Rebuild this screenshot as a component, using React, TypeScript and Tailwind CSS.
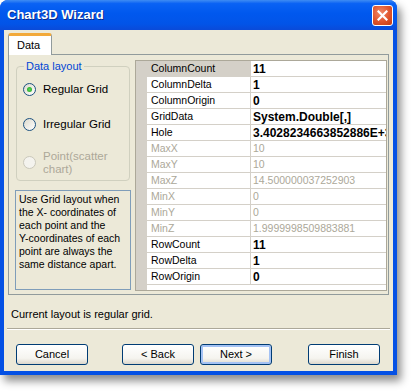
import React from "react";

type Row = {
  name: string;
  value: string;
  disabled?: boolean;
  selected?: boolean;
};

const rows: Row[] = [
  { name: "ColumnCount", value: "11", selected: true },
  { name: "ColumnDelta", value: "1" },
  { name: "ColumnOrigin", value: "0" },
  { name: "GridData", value: "System.Double[,]" },
  { name: "Hole", value: "3.4028234663852886E+38" },
  { name: "MaxX", value: "10", disabled: true },
  { name: "MaxY", value: "10", disabled: true },
  { name: "MaxZ", value: "14.500000037252903", disabled: true },
  { name: "MinX", value: "0", disabled: true },
  { name: "MinY", value: "0", disabled: true },
  { name: "MinZ", value: "1.9999998509883881", disabled: true },
  { name: "RowCount", value: "11" },
  { name: "RowDelta", value: "1" },
  { name: "RowOrigin", value: "0" },
];

const infoLines = [
  "Use Grid layout when",
  "the X- coordinates of",
  "each point and the",
  "Y-coordinates of each",
  "point are always the",
  "same distance apart.",
];

const Radio = ({ checked, disabled }: { checked?: boolean; disabled?: boolean }) => (
  <span
    className={`flex h-[13px] w-[13px] shrink-0 items-center justify-center rounded-full border ${
      disabled
        ? "border-[#cac8bb] bg-[#f4f3ee]"
        : "border-[#1c5180] bg-[linear-gradient(135deg,#dcd9cc,#ffffff)]"
    }`}
  >
    {checked && (
      <span className="h-[5px] w-[5px] rounded-full bg-[radial-gradient(circle,#55d855,#21a121)]" />
    )}
  </span>
);

const XpButton = ({ label, focused }: { label: string; focused?: boolean }) => (
  <button
    className={`flex h-[21px] w-[72px] items-center justify-center rounded-[3px] border border-[#003c74] bg-[linear-gradient(to_bottom,#ffffff,#f5f4ef_70%,#dcd7cc)] text-[11px] text-black ${
      focused ? "shadow-[inset_0_0_0_2px_#a4c2f4]" : ""
    }`}
  >
    {label}
  </button>
);

const PropertyGrid = () => (
  <div className="flex h-[231px] min-w-0 flex-1 flex-col overflow-hidden border border-[#aca899] bg-white">
    {rows.map((r) => (
      <div key={r.name} className="flex h-[16px] min-w-0">
        <div className="w-[11px] shrink-0 bg-[#d4d0c8]" />
        <div
          className={`flex w-[104px] shrink-0 items-center border-b border-r border-[#d4d0c8] pl-[4px] text-[10.5px] ${
            r.selected ? "bg-[#d4d0c8]" : ""
          } ${r.disabled ? "text-[#aca899]" : "text-black"}`}
        >
          {r.name}
        </div>
        <div
          className={`flex min-w-0 flex-1 items-center overflow-hidden whitespace-nowrap border-b border-[#d4d0c8] pl-[2px] ${
            r.disabled ? "text-[10.5px] text-[#aca899]" : "text-[12px] font-bold text-black"
          }`}
        >
          {r.value}
        </div>
      </div>
    ))}
    <div className="flex flex-1">
      <div className="w-[11px] bg-[#d4d0c8]" />
    </div>
  </div>
);

export default function App() {
  return (
    <div className="h-[392px] w-[414px] bg-white font-['Liberation_Sans',Arial,sans-serif]">
      <div className="flex h-[375px] w-[397px] flex-col rounded-t-[8px] bg-[#0450e4] shadow-[4px_6px_9px_rgba(0,0,0,0.45)]">
        {/* title bar */}
        <div className="flex h-[30px] items-center justify-between rounded-t-[8px] bg-[linear-gradient(to_bottom,#3f8cf3_0%,#0a62f4_12%,#0058ee_45%,#0254e8_80%,#0a4ad9_100%)] pl-[7px] pr-[4px]">
          <span className="text-[13px] font-bold text-white [text-shadow:1px_1px_0_#0c2a8a]">
            Chart3D Wizard
          </span>
          <div className="flex h-[21px] w-[21px] items-center justify-center rounded-[3px] border border-white bg-[radial-gradient(circle_at_40%_35%,#f08a6a,#e0542c_55%,#c23b12)]">
            <svg width="11" height="11" viewBox="0 0 11 11">
              <path d="M1.5 1.5 L9.5 9.5 M9.5 1.5 L1.5 9.5" stroke="white" strokeWidth="2.2" strokeLinecap="square" />
            </svg>
          </div>
        </div>

        {/* client area */}
        <div className="mx-[4px] mb-[4px] flex flex-1 flex-col bg-[#ece9d8] text-[11px] text-black">
          {/* tab */}
          <div className="ml-[4px] mt-[3px] flex">
            <div className="relative z-10 -mb-px flex h-[22px] w-[44px] items-center rounded-t-[3px] border-x border-t-[3px] border-x-[#919b9c] border-t-[#f2a93a] bg-white pl-[8px] text-[11px]">
              Data
            </div>
          </div>
          {/* tab panel */}
          <div className="ml-[4px] flex h-[241px] w-[381px] overflow-hidden border border-[#919b9c] bg-[#ece9d8] pl-[6px] pr-[1px] pt-[5px]">
            <div className="flex w-[116px] shrink-0 flex-col">
              <fieldset className="ml-[1px] h-[121px] w-[114px] rounded-[4px] border border-[#d0d0bf] px-[6px]">
                <legend className="ml-[1px] px-[2px] text-[11px] leading-[12px] text-[#0046d5]">
                  Data layout
                </legend>
                <div className="mt-[9px] flex items-center gap-[7px]">
                  <Radio checked />
                  <span className="text-[11.5px]">Regular Grid</span>
                </div>
                <div className="mt-[18px] flex items-center gap-[7px]">
                  <Radio />
                  <span className="text-[11.5px]">Irregular Grid</span>
                </div>
                <div className="mt-[16px] flex items-center gap-[7px]">
                  <Radio disabled />
                  <span className="text-[11.5px] leading-[13px] text-[#aca899]">
                    Point(scatter
                    <br />
                    chart)
                  </span>
                </div>
              </fieldset>
              <div className="mt-[9px] h-[100px] w-[116px] border border-[#7f9db9] pl-[3px] pt-[2px]">
                {infoLines.map((l) => (
                  <div key={l} className="whitespace-nowrap text-[10.5px] leading-[13px]">
                    {l}
                  </div>
                ))}
              </div>
            </div>
            <div className="ml-[4px] flex min-w-0 flex-1">
              <PropertyGrid />
            </div>
          </div>

          <div className="ml-[7px] mt-[12px] text-[11px] leading-[14px]">
            Current layout is regular grid.
          </div>
          <div className="mx-[3px] mt-[7px] h-[2px] border-t border-[#aca899] border-b border-b-white" />
          <div className="mt-[14px] flex pl-[12px]">
            <XpButton label="Cancel" />
            <div className="ml-[34px]">
              <XpButton label="< Back" />
            </div>
            <div className="ml-[6px]">
              <XpButton label="Next >" focused />
            </div>
            <div className="ml-[36px]">
              <XpButton label="Finish" />
            </div>
          </div>
        </div>
      </div>
    </div>
  );
}
